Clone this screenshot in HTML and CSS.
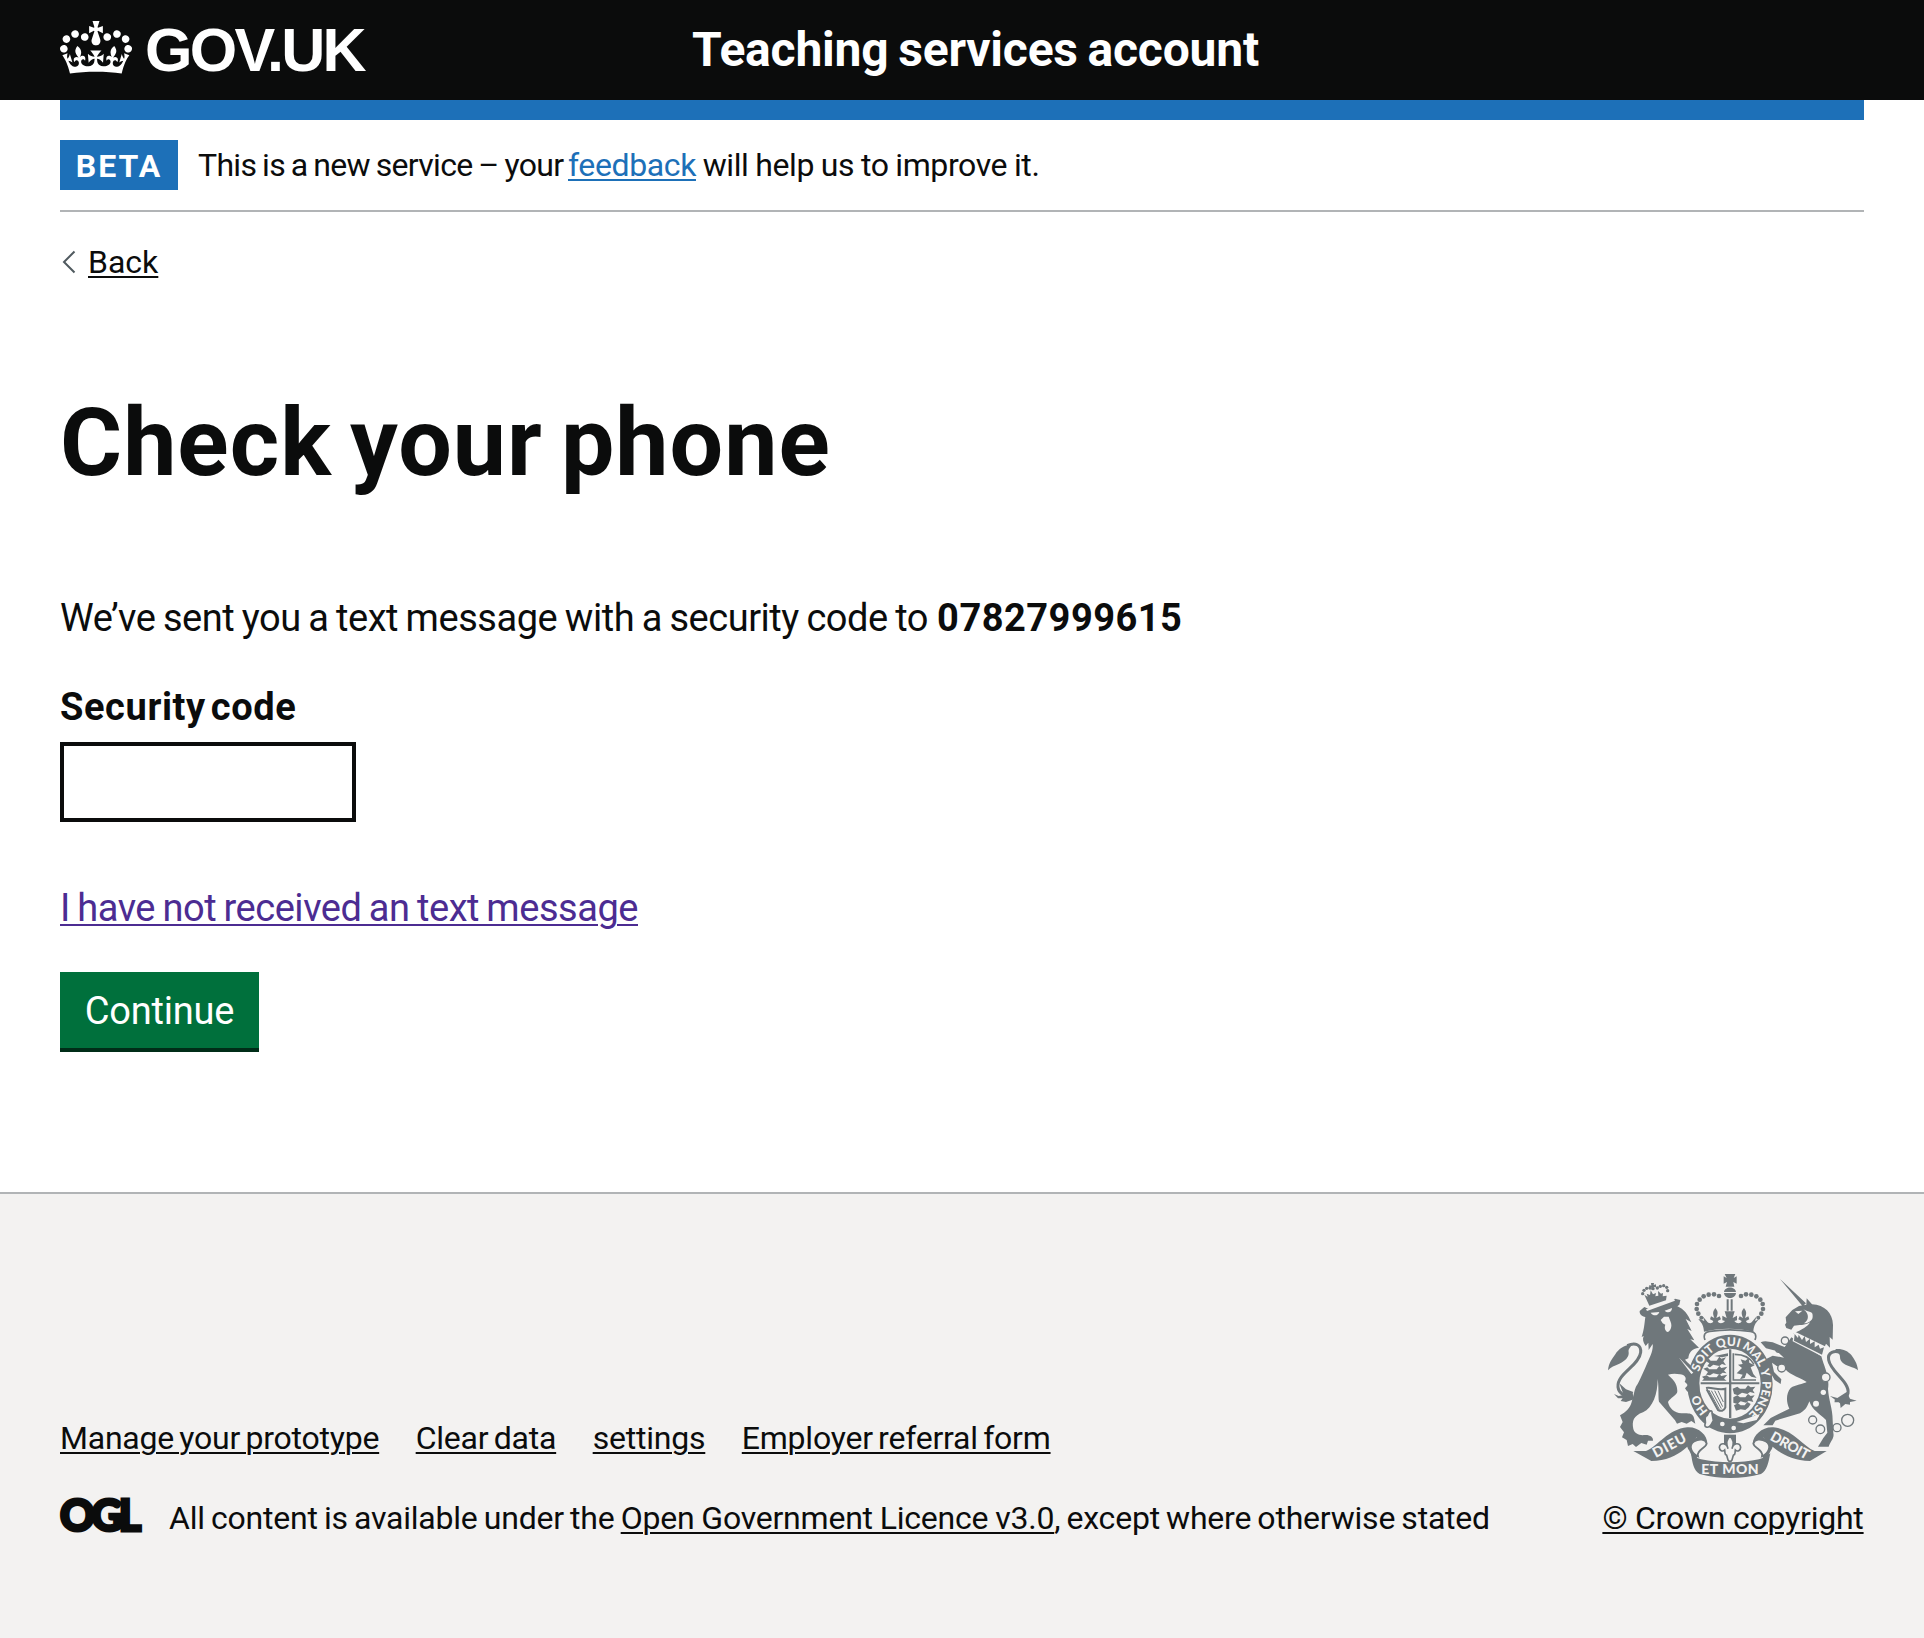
FILE: index.html
```html
<!DOCTYPE html>
<html lang="en">
<head>
<meta charset="utf-8">
<title>Check your phone</title>
<link rel="stylesheet" href="styles.css">
</head>
<body>
<header class="header">
  <div class="container header-row">
    <a class="logo" href="#">
      <svg class="crown" viewBox="0 0 132 97" width="72" height="53" aria-hidden="true"><path fill="currentColor" d="M25 30.2c3.5 1.5 7.7-.2 9.1-3.7 1.5-3.6-.2-7.8-3.9-9.2-3.6-1.4-7.6.3-9.1 3.9-1.4 3.5.3 7.5 3.9 9zM9 39.5c3.6 1.5 7.8-.2 9.2-3.7 1.5-3.6-.2-7.8-3.9-9.1-3.6-1.5-7.6.2-9.1 3.8-1.4 3.5.3 7.5 3.8 9zM4.4 57.2c3.5 1.5 7.7-.2 9.1-3.8 1.5-3.6-.2-7.7-3.9-9.1-3.5-1.5-7.6.3-9.1 3.8-1.4 3.5.3 7.6 3.9 9.1zm38.3-21.4c3.5 1.5 7.7-.2 9.1-3.8 1.5-3.6-.2-7.7-3.9-9.1-3.6-1.5-7.6.3-9.1 3.8-1.3 3.6.4 7.7 3.9 9.1zm64.4-5.6c-3.6 1.5-7.8-.2-9.1-3.7-1.5-3.6.2-7.8 3.8-9.2 3.6-1.4 7.7.3 9.2 3.9 1.3 3.5-.4 7.5-3.9 9zm15.9 9.3c-3.6 1.5-7.7-.2-9.1-3.7-1.5-3.6.2-7.8 3.7-9.1 3.6-1.5 7.7.2 9.2 3.8 1.5 3.5-.3 7.5-3.8 9zm4.7 17.7c-3.6 1.5-7.8-.2-9.2-3.8-1.5-3.6.2-7.7 3.9-9.1 3.6-1.5 7.7.3 9.2 3.8 1.3 3.5-.4 7.6-3.9 9.1zM89.3 35.8c-3.6 1.5-7.8-.2-9.2-3.8-1.4-3.6.2-7.7 3.9-9.1 3.6-1.5 7.7.3 9.2 3.8 1.4 3.6-.3 7.7-3.9 9.1zM69.7 17.7l8.9 4.7V9.3l-8.9 2.8c-.2-.3-.5-.6-.9-.9L72.4 0H59.6l3.5 11.2c-.3.3-.6.5-.9.9l-8.8-2.8v13.1l8.8-4.7c.3.3.6.7.9.9l-5 15.4v.1c-.2.8-.4 1.6-.4 2.4 0 4.1 3.1 7.5 7 8.1h.2c.3 0 .7.1 1 .1.4 0 .7 0 1-.1h.2c4-.6 7.1-4.1 7.1-8.1 0-.8-.1-1.7-.4-2.4V34l-5.1-15.4c.4-.2.7-.6 1-.9zM66 92.8c16.9 0 32.8 1.1 47.1 3.2 4-16.9 8.9-26.7 14-33.5l-9.6-3.4c1 4.9 1.1 7.2 0 10.2-1.5-1.4-3-4.3-4.2-8.7L108.6 76c2.8-2 5-3.2 7.5-3.3-4.4 9.4-10 11.9-13.6 11.2-4.3-.8-6.3-4.6-5.6-7.9 1-4.7 5.7-5.9 8-.5 4.3-8.7-3-11.4-7.6-8.8 7.1-7.2 7.9-13.5 2.1-21.1-8 6.1-8.1 12.3-4.5 20.8-4.7-5.4-12.1-2.5-9.5 6.2 3.4-5.2 7.9-2 7.2 3.1-.6 4.3-6.4 7.8-13.5 7.2-10.3-.9-10.9-8-11.2-13.8 2.5-.5 7.1 1.8 11 7.3L80.2 60c-4.1 4.4-8 5.3-12.3 5.4 1.4-4.4 8-11.6 8-11.6H55.5s6.4 7.2 7.9 11.6c-4.2-.1-8-1-12.3-5.4l1.4 16.4c3.9-5.5 8.5-7.7 10.9-7.3-.3 5.8-.9 12.8-11.1 13.8-7.2.6-12.9-2.9-13.5-7.2-.7-5 3.8-8.3 7.1-3.1 2.7-8.7-4.6-11.6-9.4-6.2 3.7-8.5 3.6-14.7-4.6-20.8-5.8 7.6-5 13.9 2.2 21.1-4.7-2.6-11.9.1-7.7 8.8 2.3-5.5 7.1-4.2 8.1.5.7 3.3-1.3 7.1-5.7 7.9-3.5.7-9-1.8-13.5-11.2 2.5.1 4.7 1.3 7.5 3.3l-4.7-15.4c-1.2 4.4-2.7 7.2-4.3 8.7-1.1-3-.9-5.3 0-10.2l-9.5 3.4c5 6.9 9.9 16.7 14 33.5 14.8-2.1 30.8-3.2 47.7-3.2z"/></svg>
      <span class="logo-text">GOV.UK</span>
    </a>
    <a class="service" href="#">Teaching services account</a>
  </div>
</header>
<div class="container">
  <div class="bar"></div>
  <div class="phase">
    <strong class="tag">BETA</strong>
    <span class="phase-text"><span class="phase-start">This is a new service – your</span> <a class="link" href="#">feedback</a> <span class="phase-end">will help us to improve it.</span></span>
  </div>
  <a class="back" href="#"><svg class="chevron" width="14" height="24" viewBox="0 0 14 24" aria-hidden="true"><path d="M12.500 1.500 2 12l10.500 10.500" fill="none" stroke="#505a5f" stroke-width="2"/></svg><span class="back-text">Back</span></a>
  <main class="main">
    <h1 class="heading">Check your phone</h1>
    <p class="body">We’ve sent you a text message with a security code to <strong class="number">07827999615</strong></p>
    <label class="label" for="code">Security code</label>
    <input class="input" id="code" type="text">
    <p class="resend"><a class="visited" href="#">I have not received an text message</a></p>
    <button class="button" type="button">Continue</button>
  </main>
</div>
<footer class="footer">
  <div class="container footer-row">
    <div class="footer-main">
      <nav class="footer-links"><a href="#">Manage your prototype</a><a href="#">Clear data</a><a href="#">settings</a><a href="#">Employer referral form</a></nav>
      <div class="licence">
        <svg class="ogl" width="84" height="36" viewBox="0 0 84 36" role="img" aria-label="OGL"><text class="ogl-text" x="0" y="33" textLength="81" lengthAdjust="spacing">OGL</text></svg>
        <span class="licence-text">All content is available under the <a class="licence-link" href="#">Open Government Licence v3.0</a>, except where otherwise stated</span>
      </div>
    </div>
    <a class="copyright" href="#">
      <svg class="arms" viewBox="54 42 750 612" width="250" height="204" aria-hidden="true">
        <defs>
          <path id="garter" d="M420 482A97 112 0 0 1 420 258A97 112 0 0 1 420 482"/>
        </defs>
        <g class="ink">
          <!-- royal crown -->
          <path d="M404 42h32l-5 12 9-5v22l-10-5 3 14h-26l4-14-10 5V49l9 5zM402 96c2-18 34-18 36 0zM402 99h36c-2 20-34 20-36 0zM410 118h6v34h-6zM422 118h6v34h-6z"/>
          <circle cx="387" cy="108" r="7"/><circle cx="372" cy="103" r="7"/><circle cx="356" cy="104" r="7"/><circle cx="341" cy="109" r="7"/><circle cx="329" cy="119" r="7"/><circle cx="321" cy="132" r="7"/><circle cx="320" cy="147" r="7"/><circle cx="325" cy="161" r="7"/><circle cx="334" cy="173" r="6"/>
          <circle cx="453" cy="108" r="7"/><circle cx="468" cy="103" r="7"/><circle cx="484" cy="104" r="7"/><circle cx="499" cy="109" r="7"/><circle cx="511" cy="119" r="7"/><circle cx="518" cy="132" r="7"/><circle cx="519" cy="147" r="7"/><circle cx="514" cy="161" r="7"/><circle cx="505" cy="173" r="6"/>
          <path d="M331 178l12 5-5-14 12 14c6 10 18 8 20 0l-10-5 3-9 10 5c-6-15-4-20 3-30 8 10 9 15 3 30l10-5 4 9-10 5c3 8 14 10 22 0l-8-2V167l13 7-6-20h30l-6 20 13-7v14l-8 2c8 10 19 8 22 0l-10-5 4-9 10 5c-6-15-5-20 3-30 7 10 9 15 3 30l10-5 3 9-10 5c2 8 14 10 20 0l12-14-5 14 12-5c-12 12-16 22-17 37-47-12-101-12-148 0-1-15-5-25-17-37z"/>
          <path d="M345 240c-6-16 0-24 14-26 40-6 82-6 122 0 14 2 20 10 14 26" fill="none" class="line" stroke-width="5"/>
          <!-- garter -->
          <path fill-rule="evenodd" d="M420 224a128 148 0 1 1 0 296a128 148 0 1 1 0-296zM420 266a92 105 0 1 0 0 210a92 105 0 1 0 0-210z"/>
          <!-- shield -->
          <path d="M417 268h7v206h-7zM332 367h176v6H332z"/>
          <path class="line" stroke-width="5" fill="none" d="M430 280v80h68M434 283c28 0 48 12 58 30"/>
          <path d="M346 302l10-6 6 6h18l8-12 6 6 14-4-8 12 8 12-12-4-8 6-18-4-10 8-8-4 6-8zM340 326l12-4 6 6h22l8-10 6 6 18-4-10 12 8 8-12-2-8 6-20-4-10 6-12-2 6-8zM336 350l14-4 8 6h22l8-10 6 6 18-4-10 12 8 6h-74l6-6z"/>
          <path d="M372 288l20-4 22-4v8l-18 4zM440 340l16-16-12-10 14-2-6-14 14 4 10-8 2 14 16 8-12 6 8 20 10 12-16-4-14-12-6 16-14 4 8-14z"/>
          <path d="M428 386l14-6 8 6h16l8-10 8 6 14-2-8 10 6 10-14-4-8 6-16-4-12 8-12-4zM430 412l12-6 8 6h16l8-10 8 6 12-2-8 10 4 10-14-4-8 6-16-4-10 8-12-4zM432 436l12-6 8 6h12l8-10 10 6-6 10-10 8-14-2-14 4z"/>
          <path fill="none" class="line" stroke-width="6" d="M348 384c16-4 36 8 58 2v56c-4 12-14 12-22 8l-34-62"/>
          <path fill="none" class="line" stroke-width="3" d="M364 392l30 54M374 392l24 48M384 392l16 34M356 390l32 58"/>
          <!-- lion -->
          <path d="M178 148l66-24 11-8 16 4-3 14-6 5c20 8 32 24 42 48l-17-10 18 36-13-6 21 34-12-3 26 25c-22 3-30 14-32 32l-10 4c16 18 38 30 40 54 3 16 4 32 3 46l-16-3-10-6-10 5-7-10 9-10-10-10c8-12 0-20-14-22-14-3-25-2-36 1 22 20 28 32 28 50 0 12-22 20-28 32 4 20 20 32 40 34 20 0 34-2 38 14l4 17-12-8-14 8-15-5-14 5-6-10-48-56c-3-14 0-40-4-68 0 44-14 86-44 100-28 10-34 26-29 50 4 14 18 20 34 18 16-1 26 6 25 17h-15l-4 12-16-5-16 12-10-9-14 6-4-18-14-8 6-15-12-16 8-15-8-20c18-10 30-22 35-40 8-25 9-44 18-54 10-20 20-41 30-66 10-20 17-38 15-54l-12 18-1-22-8 10c-8-12-10-20-6-30l-6 3c8-26 8-38 11-60-10-2-18-8-17-18l14-12z"/>
          <path d="M163 104l10 6-3-9 10 4 2-14 7 12 9-4-2 10 9-2-1-14 9 8 6-2-1 10 12-2-2 14-50 16z"/>
          <circle cx="158" cy="101" r="5"/><circle cx="162" cy="91" r="5"/><circle cx="170" cy="85" r="5"/><circle cx="180" cy="84" r="5"/><circle cx="189" cy="86" r="5"/><circle cx="202" cy="84" r="5"/><circle cx="211" cy="79" r="5"/><circle cx="221" cy="77" r="5"/><circle cx="230" cy="82" r="5"/><circle cx="233" cy="92" r="5"/><path d="M183 69h9l-1 6 7-2v9l-7-1 1 9h-7l-1-8-6 2v-9l6 2z"/>
          <path d="M54 331c2-22 12-34 22-48 10-16 24-26 50-30-6 12-12 14-10 24 2 14-12 28-28 34-14 6-26 10-34 20z"/>
          <path class="line" fill="none" stroke-width="9" d="M112 257c24-12 42-2 40 20-4 40-72 64-68 104 2 18 20 30 42 28"/>
          <path d="M72 402l14 6 12-2 30-6 4 18-24 8-16-3 6-8-14 0zM88 370l20 18 22 8-8 14-22-8z"/>
          <!-- unicorn -->
          <path d="M570 57l78 73-10 9zM587 172l20-22 20-12 22-4 1-19 16 18c38 2 62 26 63 62l-1 44-9-8 1 32-12-12-6 14-92-44c26-12 44-22 50-34-14 10-34 8-48 10l-8 12-15-5-4-10 4-6z"/>
          <path d="M604 232l90 57c8 30 26 64 20 98 2 34 14 58 14 94l2 38c4 16-10 26-14 41h-32l16-26 12-16-4-38c-18-18-42-30-50-56-6 14-8 24-28 36l-74 22-8 14h-28l22-22 56-28c-10-20-10-46 4-62 14-10 38-12 48-18-30-18-58-24-68-44l-22-4-14-10 6 28 22 22-2 14-18-12-16-28-8-36 18-9 34 6-22-20-32-8-16-18c12-6 24-2 36 0l36 14z"/>
          <path d="M804 331c-2-22-12-34-20-46-10-12-26-20-48-18 6 14 14 12 14 24 0 14 12 22 28 28 10 4 20 6 26 12z"/>
          <path class="line" fill="none" stroke-width="9" d="M758 280c-26-12-46-2-42 20 6 36 64 66 58 100-4 18-20 24-40 22"/>
          <path d="M720 408l22 6 28-18 10 20 20 6-20 4 0 8-14-2-14 12-2-14z"/>
        </g>
        <g class="paper">
          <path d="M182 158l26-2c-4 12-18 14-26 2zM224 152l22-8c0 12-12 18-22 8zM212 180l10-10 14 0 6 16c6 14-2 28-8 30-8-2-12-12-8-22l-8-4z"/>
          <path d="M168 148l84-31 3 5-84 31z"/>
          <path d="M615 154l22-2-12 10zM640 148c16 10 30 4 28 22 0 12-14 20-26 20 14-8 18-28-2-42z"/>
          <circle cx="678" cy="431" r="9"/><circle cx="700" cy="397" r="8"/><circle cx="397" cy="492" r="7"/><circle cx="431" cy="504" r="7"/>
          <path d="M612 214l96 46-14 28-86-44z"/>
          <path d="M266 292l44 46-6 4zM440 486l70-24-10 18-40 10z"/>
          <circle cx="575" cy="324" r="12"/><circle cx="707" cy="352" r="13"/>
        </g>
        <g class="ink"><path d="M614 222l10 12 2-10 10 16 8-12 4 18 12-10 0 16 14-8 0 18 12-8 4 12 12-4-6 22-84-42z"/></g>
        <g class="line" fill="none" stroke-width="4">
          <circle cx="585" cy="242" r="11"/><circle cx="566" cy="268" r="9"/><circle cx="575" cy="324" r="12"/><circle cx="707" cy="352" r="13"/><circle cx="668" cy="480" r="12"/><circle cx="691" cy="508" r="13"/><circle cx="741" cy="503" r="12"/><circle cx="773" cy="481" r="18"/>
        </g>
        <g class="garter-text">
          <text><textPath href="#garter" startOffset="15.500%">HO</textPath></text>
          <text><textPath href="#garter" startOffset="36.500%">SOIT</textPath></text>
          <text><textPath href="#garter" startOffset="49.200%">QUI</textPath></text>
          <text><textPath href="#garter" startOffset="61.500%">MAL</textPath></text>
          <text><textPath href="#garter" startOffset="70.500%">Y</textPath></text>
          <text><textPath href="#garter" startOffset="82.500%">PENSE</textPath></text>
        </g>
        <path class="outlined" d="M352 466c-12 2-4 18-6 24-6 12 8 16 16 6l8-14-4-22c2-10-8-12-14 6z"/>
        <!-- motto ribbon -->
        <g class="ink">
          <path d="M130 573h38c36-14 66-66 124-71 34-2 60 24 60 48-6 18-36 22-26 38l-14 14-14-30c-18-24 10-26 24-42-10 6-50 72-138 73z"/>
          <path d="M710 573h-36c-36-14-66-66-124-71-34-2-60 24-62 48 6 18 36 22 26 38l14 14 14-30c18-24-10-26-24-42 10 6 50 72 142 73z"/>
          <path d="M303 580c8 12 18 14 30 18 56 12 118 12 174 0 12-4 22-6 34-18-6 30-10 52-28 62-58 16-126 16-184 0-18-10-22-32-26-62z"/>
          <path d="M402 524h36v32h-36z"/>
        </g>
        <g class="outlined"><path d="M312 545c16-10 34-8 38 6-4 14-32 20-26 38-20-10-30-32-12-44zM528 545c-16-10-34-8-38 6 4 14 32 20 26 38 20-10 30-32 12-44z"/>
          <path d="M420 528c12 14 12 20 6 38 4-18 24-20 26-4 0 10-10 14-16 8-2 10 2 12-6 16l-4 14c-4 6-8 6-12 0l-4-14c-8-4-4-6-6-16-6 6-16 2-16-8 2-16 22-14 26 4-6-18-6-24 6-38z"/></g>
        <g class="motto">
          <text transform="translate(245 569) rotate(-28)" textLength="108">DIEU</text>
          <text transform="translate(420 643)" textLength="172">ET MON</text>
          <text transform="translate(593 569) rotate(29)" textLength="126">DROIT</text>
        </g>
      </svg>
      <span class="copyright-text">© Crown copyright</span>
    </a>
  </div>
</footer>
</body>
</html>
```
FILE: styles.css
```css
* { box-sizing: border-box; }
body { margin: 0; background: #fff; color: #0b0c0c; font: 400 32px/40px Roboto, sans-serif; }
a { color: inherit; text-decoration-thickness: 2px; text-underline-offset: 3px; }
.container { margin: 0 60px; }
.header { background: #0b0c0c; color: #fff; height: 100px; }
.header-row { display: flex; height: 100px; }
.header a { text-decoration: none; }
.logo { display: flex; width: 632px; padding-top: 21px; }
.logo-text { font: 700 61px/60px "Liberation Sans", sans-serif; margin-left: 13px; margin-top: -1px; letter-spacing: -2.7px; align-self: flex-start; }
.service { font-weight: 700; font-size: 48px; line-height: 60px; padding-top: 20px; align-self: flex-start; letter-spacing: -0.2px; word-spacing: -2px; }
.bar { height: 20px; background: #1d70b8; }
.phase { display: flex; align-items: center; height: 92px; border-bottom: 2px solid #b1b4b6; }
.tag { background: #1d70b8; color: #fff; width: 118px; height: 50px; line-height: 52px; text-align: center; letter-spacing: 2px; }
.phase-text { margin-left: 20px; white-space: nowrap; letter-spacing: -0.39px; word-spacing: -2.85px; }
.phase-start { letter-spacing: -0.7px; word-spacing: -1.4px; }
.phase-end { margin-left: 2px; word-spacing: -0.8px; }
.link { color: #1d70b8; }
.back { display: inline-flex; align-items: center; margin-top: 30px; text-decoration: none; }
.chevron { margin-left: 2px; }
.back-text { margin-left: 12px; text-decoration: underline 2px; text-underline-offset: 3px; }
.main { margin-top: 110px; font-size: 38px; line-height: 50px; }
.heading { margin: 0; font-size: 95px; line-height: 100px; letter-spacing: 1px; word-spacing: -6.500px; }
.body { margin: 100px 0 0; white-space: nowrap; letter-spacing: -0.46px; word-spacing: -1.43px; }
.number { margin-left: 1.500px; letter-spacing: 0.5px; }
.label { display: block; margin-top: 39px; font-weight: 700; letter-spacing: 0.6px; word-spacing: -5px; }
.input { display: block; margin-top: 10px; width: 296px; height: 80px; border: 4px solid #0b0c0c; border-radius: 0; }
.resend { margin: 61px 0 0; letter-spacing: -0.46px; word-spacing: -1.6px; }
.visited { color: #4c2c92; }
.button { display: block; margin-top: 39px; width: 199px; height: 76px; padding: 2px 0 0; border: 0; background: #00703c; box-shadow: 0 4px 0 #002d18; color: #fff; font: 38px/74px Roboto, sans-serif; letter-spacing: -0.2px; }
.footer { margin-top: 144px; height: 446px; background: #f3f2f1; border-top: 2px solid #b1b4b6; }
.footer-row { display: flex; justify-content: space-between; align-items: flex-end; height: 344px; letter-spacing: -0.22px; word-spacing: -1.5px; }
.footer-links { display: flex; gap: 36.500px; margin-bottom: 40px; word-spacing: -2.4px; }
.licence { display: flex; }
.licence-text { margin-left: 25px; white-space: nowrap; }
.licence-link { word-spacing: -0.85px; }
.ogl { overflow: visible; }
.ogl-text { font: 900 43px Lato, sans-serif; fill: #0b0c0c; stroke: #0b0c0c; stroke-width: 3px; }
.copyright { display: flex; flex-direction: column; align-items: center; width: 262px; white-space: nowrap; }
.copyright-text { word-spacing: 0; }
.arms { margin-bottom: 20px; letter-spacing: 0; word-spacing: 0; }
.ink { fill: #6f777b; }
.line { stroke: #6f777b; }
.paper { fill: #f3f2f1; }
.outlined { fill: #f3f2f1; stroke: #6f777b; stroke-width: 5px; }
.garter-text { font: 900 36px Lato, sans-serif; fill: #f3f2f1; text-anchor: middle; }
.motto { font: 900 42px Lato, sans-serif; fill: #f3f2f1; text-anchor: middle; }
```
